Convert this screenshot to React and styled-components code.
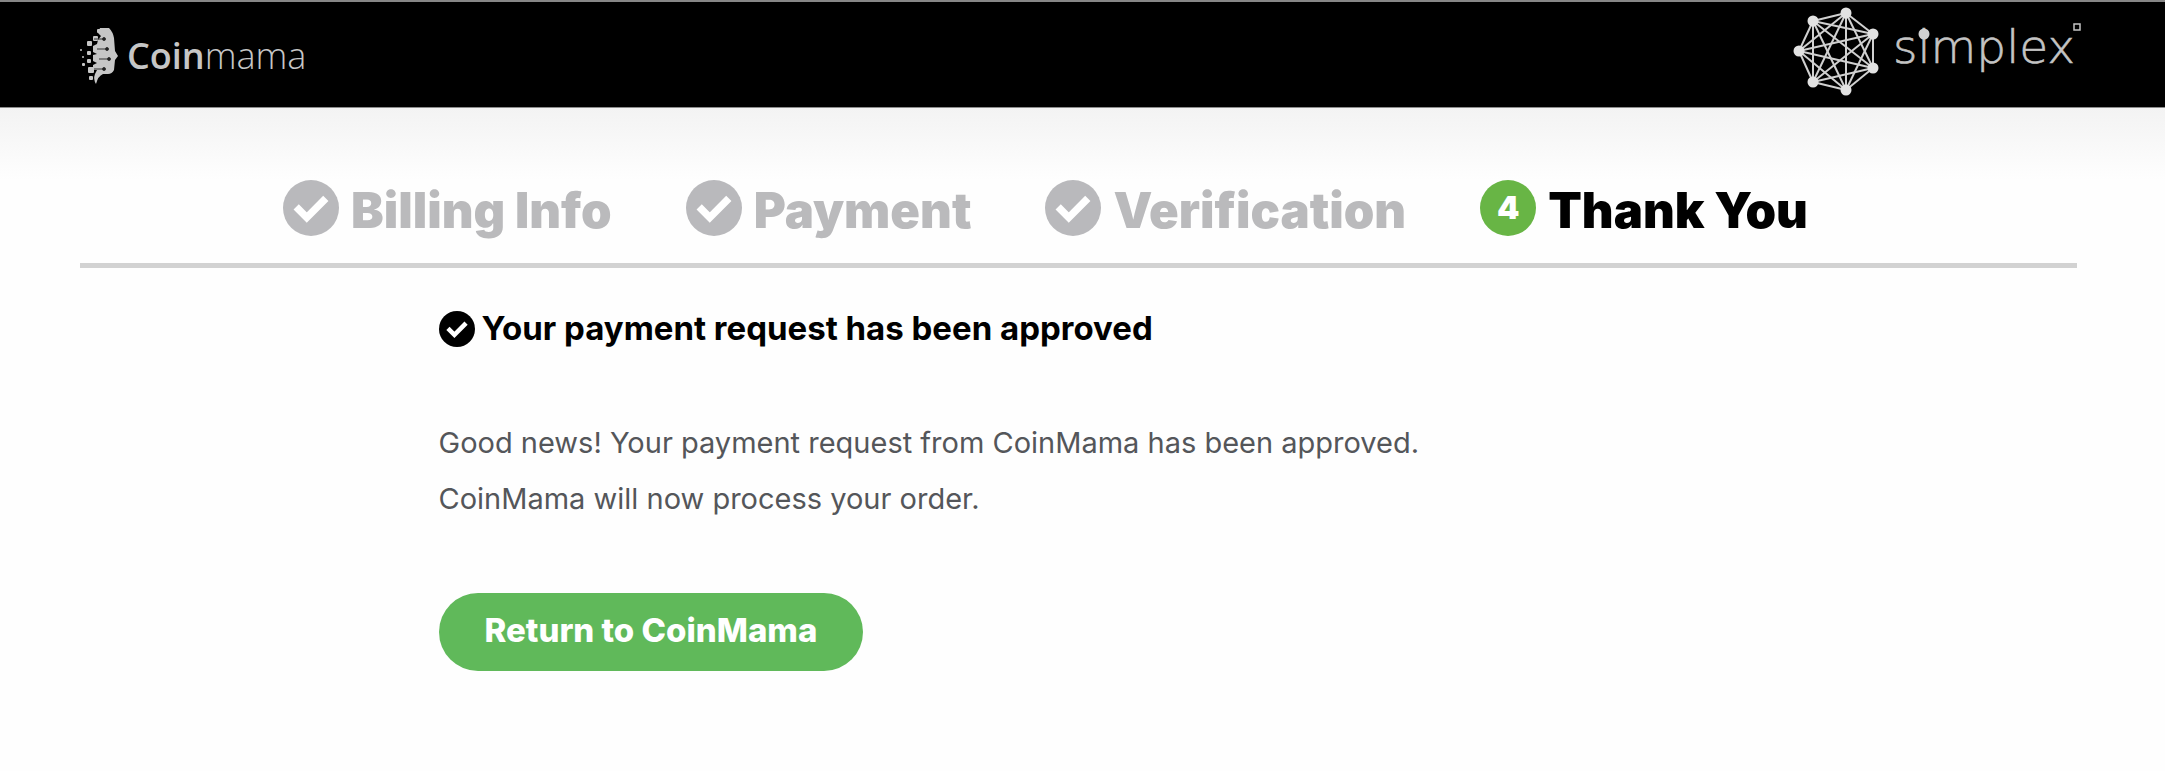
import React from 'react';
import styled, { createGlobalStyle } from 'styled-components';

const GlobalStyle = createGlobalStyle`
  * {
    box-sizing: border-box;
  }

  body {
    margin: 0;
    background-color: #fefefe;
    font-family: Inter, "Open Sans", sans-serif;
    color: #000;
  }
`;

const Header = styled.header`
  display: flex;
  align-items: flex-start;
  justify-content: space-between;
  height: 108px;
  padding: 2px 81px 0 80px;
  background-color: #000;
  border-top: 2px solid #868686;
  border-bottom: 1px solid #8c8c8c;
`;

const BrandLink = styled.a`
  display: flex;
  align-items: center;
  gap: 8px;
  padding-top: 24px;
  color: #c6c6c6;
  text-decoration: none;
`;

const BrandName = styled.span`
  font-family: "Open Sans", "Noto Sans", sans-serif;
  font-size: 36px;
  line-height: 56px;
  font-weight: 300;

  strong {
    font-weight: 600;
  }
`;

const Main = styled.main`
  padding: 0 88px 40px 80px;
  background-image: linear-gradient(#f3f3f3, #fefefe 72px);
`;

const Steps = styled.ol`
  display: flex;
  gap: 74px;
  margin: 0;
  padding: 69px 0 24px 203px;
  list-style: none;
  border-bottom: 5px solid #d2d2d2;
`;

const Step = styled.li`
  display: flex;
  align-items: center;
  gap: 12px;
  font-size: 49px;
  line-height: 56px;
  font-weight: 900;
  white-space: nowrap;
  color: ${({ $active }) => ($active ? '#000' : '#bababc')};
`;

const StepBadge = styled.span`
  display: flex;
  flex: none;
  align-items: center;
  justify-content: center;
  width: 56px;
  height: 56px;
  border-radius: 50%;
  font-size: 32px;
  color: #fff;
  background-color: ${({ $active }) => ($active ? '#68b545' : '#b9b9bc')};
`;

const StepLabel = styled.span`
  padding-top: 6px;
`;

const Content = styled.section`
  max-width: 1280px;
  margin: 0 auto;
  padding-top: 40px;
`;

const Title = styled.h1`
  display: flex;
  align-items: center;
  gap: 7px;
  margin: 0 0 65px;
  font-size: 33px;
  line-height: 40px;
  font-weight: 700;
`;

const TitleBadge = styled.span`
  display: flex;
  flex: none;
  align-items: center;
  justify-content: center;
  width: 36px;
  height: 36px;
  border-radius: 50%;
  background-color: #000;
`;

const TitleText = styled.span`
  padding-bottom: 2px;
`;

const Message = styled.p`
  margin: 0;
  font-size: 29px;
  line-height: 56px;
  color: #54565a;
`;

const ReturnButton = styled.button`
  height: 78px;
  margin-top: 66px;
  padding: 0 46px 4px;
  border: 0;
  border-radius: 39px;
  font-family: inherit;
  font-size: 33px;
  line-height: 40px;
  font-weight: 800;
  color: #fff;
  background-color: #60b95a;
  cursor: pointer;
`;

const steps = ['Billing Info', 'Payment', 'Verification', 'Thank You'];
const activeStep = 3;

const nodes = [
  [48, 9],
  [15, 17],
  [1, 47],
  [15, 78],
  [48, 86],
  [75, 64],
  [75, 30],
];

// x, y, size
const pixels = [
  [0, 21, 2], [2, 28, 2], [2, 35, 3], [7, 13, 5], [7, 23, 4], [7, 31, 4],
  [8, 39, 6], [9, 48, 4], [13, 8, 5], [17, 1, 4],
];

const strands = [
  [24, 11],
  [27, 21],
  [29, 31],
  [24, 41],
];

function Check({ size }) {
  return (
    <svg width={size} height={size} viewBox="0 0 34 34" aria-hidden="true">
      <path d="M3 16 L13 26 L31 8" fill="none" stroke="#fff" strokeWidth="7" />
    </svg>
  );
}

function CoinmamaMark() {
  return (
    <svg width="39" height="56" viewBox="0 0 39 56" fill="#c6c6c6" aria-hidden="true">
      <path d="M20 0 H29 Q33 4 34 10 L35 23 L38 28 L35 32 L34 42 Q32 46 28 46 H23 Q18 48 16 56 Q13 51 15 46 L17 42 L13 42 V37 L17 35 L13 33 V27 L17 26 L13 24 V18 L17 16 L18 12 L21 8 L18 5 Z" />
      {pixels.map(([x, y, s]) => (
        <rect key={`${x}-${y}`} x={x} y={y} width={s} height={s} rx="1" />
      ))}
      {strands.map(([x, y]) => (
        <g key={y} fill="#1c1c1c" stroke="#333">
          <line x1={x - 10} y1={y} x2={x} y2={y} />
          <circle cx={x} cy={y} r="1.5" />
        </g>
      ))}
    </svg>
  );
}

function SimplexLogo() {
  return (
    <svg width="292" height="100" viewBox="-6 0 292 100" role="img" aria-label="simplex">
      <g stroke="#d0d0d0" strokeWidth="2">
        {nodes.map(([x1, y1], i) =>
          nodes.slice(i + 1).map(([x2, y2]) => (
            <line key={`${x1}-${y1}-${x2}-${y2}`} x1={x1} y1={y1} x2={x2} y2={y2} />
          ))
        )}
      </g>
      <g fill="#e2e2e2">
        {nodes.map(([x, y]) => (
          <circle key={`${x}-${y}`} cx={x} cy={y} r="5.5" />
        ))}
      </g>
      <text
        x="95"
        y="59"
        fill="#c4c4c4"
        stroke="#c4c4c4"
        strokeWidth="0.6"
        fontFamily="'DejaVu Sans', sans-serif"
        fontSize="47"
        fontWeight="200"
      >
        simplex
      </text>
      <circle cx="126" cy="30" r="5.5" fill="#d0d0d0" />
      <rect x="276" y="20" width="6" height="6" fill="none" stroke="#c4c4c4" strokeWidth="1.5" />
    </svg>
  );
}

function App() {
  return (
    <>
      <GlobalStyle />
      <Header>
        <BrandLink href="#">
          <CoinmamaMark />
          <BrandName>
            <strong>Coin</strong>mama
          </BrandName>
        </BrandLink>
        <SimplexLogo />
      </Header>
      <Main>
        <Steps>
          {steps.map((label, index) => (
            <Step key={label} $active={index === activeStep}>
              <StepBadge $active={index === activeStep}>
                {index < activeStep ? <Check size={36} /> : index + 1}
              </StepBadge>
              <StepLabel>{label}</StepLabel>
            </Step>
          ))}
        </Steps>
        <Content>
          <Title>
            <TitleBadge>
              <Check size={22} />
            </TitleBadge>
            <TitleText>Your payment request has been approved</TitleText>
          </Title>
          <Message>Good news! Your payment request from CoinMama has been approved.</Message>
          <Message>CoinMama will now process your order.</Message>
          <ReturnButton type="button">Return to CoinMama</ReturnButton>
        </Content>
      </Main>
    </>
  );
}

export default App;
